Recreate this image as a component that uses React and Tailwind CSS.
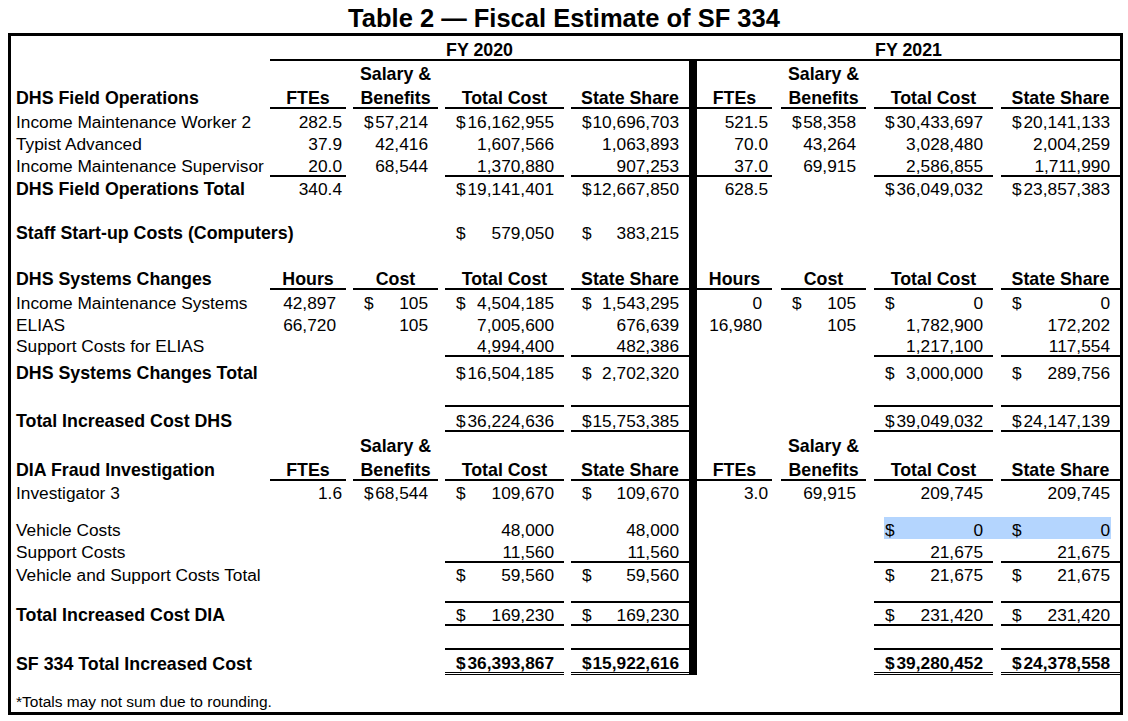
import React from "react";

const COLS =
  "grid grid-cols-[259px_76px_7px_85px_7px_119px_7px_118px_8px_75px_9px_85px_8px_119px_8px_119px]";

const HL = "bg-[#b4d5fe]";

const Cell = ({ v, ul, ol, dbl, head, fte, bold, hl }) => {
  const bottom = dbl
    ? "border-b-[3px] border-double border-black"
    : ul
    ? "border-b-2 border-black"
    : "border-b-2 border-transparent";
  const top = ol ? "border-t-2 border-black" : "";

  if (head) {
    return (
      <div
        className={`flex items-end justify-center font-bold text-[17.8px] whitespace-nowrap ${bottom} ${top}`}
      >
        {v}
      </div>
    );
  }

  const dollar = typeof v === "string" && v.startsWith("$ ");
  const num = dollar ? v.slice(2) : v;

  // highlighted cells (selection look in FY 2021 vehicle row)
  if (hl === "left") {
    return (
      <div className={`flex items-stretch pl-[10px] ${bottom}`}>
        <div className={`flex flex-1 items-end justify-between pl-[1px] pr-[10px] ${HL}`}>
          {dollar && <span>$</span>}
          <span>{num}</span>
        </div>
      </div>
    );
  }
  if (hl === "right") {
    return (
      <div className={`flex items-stretch pr-[9px] ${bottom}`}>
        <div className={`flex flex-1 items-end justify-between pl-[11px] pr-[1px] ${HL}`}>
          {dollar && <span>$</span>}
          <span>{num}</span>
        </div>
      </div>
    );
  }

  return (
    <div
      className={`flex items-end whitespace-nowrap pl-[11px] ${
        dollar ? "justify-between" : "justify-end"
      } ${fte ? "pr-[4px]" : "pr-[10px]"} ${bottom} ${top} ${bold ? "font-bold" : ""}`}
    >
      {dollar && <span>$</span>}
      <span>{num}</span>
    </div>
  );
};

const Row = ({
  h,
  label,
  bold,
  vals = [],
  ul = [],
  ol = [],
  dbl = [],
  head = false,
  fte = false,
  bar = true,
  valBold = false,
  hl = false,
}) => {
  const cells = [
    <div
      key="label"
      className={`flex items-end pl-[5px] whitespace-nowrap border-b-2 border-transparent ${
        bold ? "font-bold text-[17.8px]" : ""
      }`}
    >
      {label}
    </div>,
  ];
  for (let i = 0; i < 8; i++) {
    cells.push(
      <Cell
        key={i}
        v={vals[i]}
        ul={ul.includes(i)}
        ol={ol.includes(i)}
        dbl={dbl.includes(i)}
        head={head}
        fte={fte && (i === 0 || i === 4)}
        bold={valBold}
        hl={hl && i === 6 ? "left" : hl && i === 7 ? "right" : null}
      />
    );
    if (i === 3) cells.push(<div key="bar" className={bar ? "bg-black" : ""} />);
    else if (i === 6 && hl) cells.push(<div key="g6" className={`mb-[2px] ${HL}`} />);
    else if (i !== 7) cells.push(<div key={"g" + i} />);
  }
  return <div className={`${COLS} ${h}`}>{cells}</div>;
};

const Blank = ({ h, bar = true }) => <Row h={h} bar={bar} />;

const SalaryRow = ({ h }) => (
  <Row h={h} head vals={["", "Salary &", "", "", "", "Salary &", "", ""]} />
);

const ALL = [0, 1, 2, 3, 4, 5, 6, 7];

export default function App() {
  return (
    <div className="w-[1128px] h-[721px] bg-white text-black font-['Liberation_Sans',Arial,sans-serif] text-[17.3px] leading-[17.5px]">
      <div className="h-[33px] pt-[6px] text-center font-bold text-[25.5px] leading-[25.5px]">
        Table 2 — Fiscal Estimate of SF 334
      </div>

      <div className="ml-[8px] w-[1115px] h-[682px] border-[3px] border-black">
        {/* fiscal year headings */}
        <div className={`${COLS} h-[25px]`}>
          <div />
          <div className="col-span-7 flex items-end justify-center font-bold text-[17.8px] border-b-2 border-black">
            FY 2020
          </div>
          <div className="border-b-2 border-black" />
          <div className="col-span-7 flex items-end justify-center font-bold text-[17.8px] border-b-2 border-black">
            FY 2021
          </div>
        </div>

        <SalaryRow h="h-[24px]" />
        <Row
          h="h-[24px]"
          head
          label="DHS Field Operations"
          bold
          vals={["FTEs", "Benefits", "Total Cost", "State Share", "FTEs", "Benefits", "Total Cost", "State Share"]}
          ul={ALL}
        />
        <Row
          h="h-[24px]"
          fte
          label="Income Maintenance Worker 2"
          vals={["282.5", "$ 57,214", "$ 16,162,955", "$ 10,696,703", "521.5", "$ 58,358", "$ 30,433,697", "$ 20,141,133"]}
        />
        <Row
          h="h-[22px]"
          fte
          label="Typist Advanced"
          vals={["37.9", "42,416", "1,607,566", "1,063,893", "70.0", "43,264", "3,028,480", "2,004,259"]}
        />
        <Row
          h="h-[22px]"
          fte
          label="Income Maintenance Supervisor"
          vals={["20.0", "68,544", "1,370,880", "907,253", "37.0", "69,915", "2,586,855", "1,711,990"]}
          ul={[0, 2, 3, 4, 6, 7]}
        />
        <Row
          h="h-[23px]"
          fte
          label="DHS Field Operations Total"
          bold
          vals={["340.4", "", "$ 19,141,401", "$ 12,667,850", "628.5", "", "$ 36,049,032", "$ 23,857,383"]}
        />
        <Blank h="h-[18px]" />
        <Row
          h="h-[26px]"
          label="Staff Start-up Costs (Computers)"
          bold
          vals={["", "", "$ 579,050", "$ 383,215"]}
          ol={[2, 3]}
        />
        <Blank h="h-[23px]" />

        {/* systems changes */}
        <Row
          h="h-[23px]"
          head
          label="DHS Systems Changes"
          bold
          vals={["Hours", "Cost", "Total Cost", "State Share", "Hours", "Cost", "Total Cost", "State Share"]}
          ul={ALL}
        />
        <Row
          h="h-[24px]"
          label="Income Maintenance Systems"
          vals={["42,897", "$ 105", "$ 4,504,185", "$ 1,543,295", "0", "$ 105", "$ 0", "$ 0"]}
        />
        <Row
          h="h-[22px]"
          label="ELIAS"
          vals={["66,720", "105", "7,005,600", "676,639", "16,980", "105", "1,782,900", "172,202"]}
        />
        <Row
          h="h-[21px]"
          label="Support Costs for ELIAS"
          vals={["", "", "4,994,400", "482,386", "", "", "1,217,100", "117,554"]}
          ul={[2, 3, 6, 7]}
        />
        <Row
          h="h-[27px]"
          label="DHS Systems Changes Total"
          bold
          vals={["", "", "$ 16,504,185", "$ 2,702,320", "", "", "$ 3,000,000", "$ 289,756"]}
        />
        <Blank h="h-[21px]" />
        <Row
          h="h-[27px]"
          label="Total Increased Cost DHS"
          bold
          vals={["", "", "$ 36,224,636", "$ 15,753,385", "", "", "$ 39,049,032", "$ 24,147,139"]}
          ol={[2, 3, 6, 7]}
          ul={[2, 3, 6, 7]}
        />

        {/* fraud investigation */}
        <SalaryRow h="h-[25px]" />
        <Row
          h="h-[24px]"
          head
          label="DIA Fraud Investigation"
          bold
          vals={["FTEs", "Benefits", "Total Cost", "State Share", "FTEs", "Benefits", "Total Cost", "State Share"]}
          ul={ALL}
        />
        <Row
          h="h-[23px]"
          fte
          label="Investigator 3"
          vals={["1.6", "$ 68,544", "$ 109,670", "$ 109,670", "3.0", "69,915", "209,745", "209,745"]}
        />
        <Blank h="h-[13px]" />
        <Row
          h="h-[24px]"
          hl
          label="Vehicle Costs"
          vals={["", "", "48,000", "48,000", "", "", "$ 0", "$ 0"]}
        />
        <Row
          h="h-[22px]"
          label="Support Costs"
          vals={["", "", "11,560", "11,560", "", "", "21,675", "21,675"]}
          ul={[2, 3, 6, 7]}
        />
        <Row
          h="h-[23px]"
          label="Vehicle and Support Costs Total"
          vals={["", "", "$ 59,560", "$ 59,560", "", "", "$ 21,675", "$ 21,675"]}
        />
        <Blank h="h-[15px]" />
        <Row
          h="h-[25px]"
          label="Total Increased Cost DIA"
          bold
          vals={["", "", "$ 169,230", "$ 169,230", "", "", "$ 231,420", "$ 231,420"]}
          ol={[2, 3, 6, 7]}
          ul={[2, 3, 6, 7]}
        />
        <Blank h="h-[22px]" />
        <Row
          h="h-[27px]"
          label="SF 334 Total Increased Cost"
          bold
          valBold
          vals={["", "", "$ 36,393,867", "$ 15,922,616", "", "", "$ 39,280,452", "$ 24,378,558"]}
          ol={[2, 3, 6, 7]}
          dbl={[2, 3, 6, 7]}
        />
        <Blank h="h-[15px]" bar={false} />
        <div className="h-[22px] flex items-end pb-[3px] pl-[5px] text-[15.5px] leading-[15.5px]">
          *Totals may not sum due to rounding.
        </div>
      </div>
    </div>
  );
}
